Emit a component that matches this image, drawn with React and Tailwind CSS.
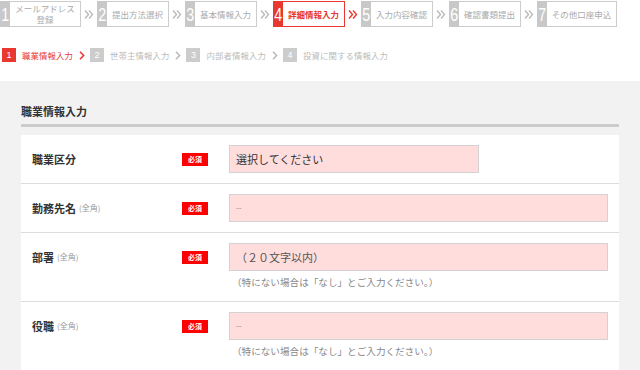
import React from "react";

const font = { fontFamily: '"Noto Sans CJK JP", "Noto Sans", sans-serif' };

const steps = [
  { n: 1, lines: ["メールアドレス", "登録"], w: "w-[71px]" },
  { n: 2, lines: ["提出方法選択"], w: "w-[62px]" },
  { n: 3, lines: ["基本情報入力"], w: "w-[62px]" },
  { n: 4, lines: ["詳細情報入力"], w: "w-[62px]", active: true },
  { n: 5, lines: ["入力内容確認"], w: "w-[62px]" },
  { n: 6, lines: ["確認書類提出"], w: "w-[62px]" },
  { n: 7, lines: ["その他口座申込"], w: "w-[70px]" },
];

const subs = [
  { n: 1, t: "職業情報入力", active: true },
  { n: 2, t: "世帯主情報入力" },
  { n: 3, t: "内部者情報入力" },
  { n: 4, t: "投資に関する情報入力" },
];

function DoubleChevron({ color }) {
  return (
    <svg width="10" height="9" viewBox="0 0 10 9" fill="none">
      <polyline points="1,0.5 4.5,4.5 1,8.5" stroke={color} strokeWidth="1.4" />
      <polyline points="5,0.5 8.5,4.5 5,8.5" stroke={color} strokeWidth="1.4" />
    </svg>
  );
}

function Chevron({ color }) {
  return (
    <svg width="6" height="9" viewBox="0 0 6 9" fill="none">
      <polyline points="1,0.8 4.6,4.5 1,8.2" stroke={color} strokeWidth="1.6" />
    </svg>
  );
}

function Badge() {
  return (
    <span className="inline-flex items-center justify-center w-[26px] h-[13px] bg-[#ff0000] text-white text-[7px] font-bold leading-none">
      必須
    </span>
  );
}

function Row({ label, sub, inputW, help, text, textColor, last }) {
  return (
    <div className={`flex pl-[11px] pr-[11px] pt-[10px] pb-[10px] ${last ? "" : "border-b border-[#dddddd]"}`}>
      <div className="w-[150px] h-[28px] flex items-center shrink-0">
        <span className="text-[11px] font-bold text-[#333] leading-none">{label}</span>
        {sub && <span className="ml-[3px] text-[8px] text-[#999] leading-none">{sub}</span>}
      </div>
      <div className="w-[47px] h-[28px] flex items-center shrink-0">
        <Badge />
      </div>
      <div className="flex-1 flex flex-col">
        <div className={`h-[28px] ${inputW} bg-[#ffdddd] border border-[#d3d3d3] flex items-center pl-[6px]`}>
          <span className={`leading-none ${text === "--" ? "text-[8px] text-[#888]" : "text-[11px]"} ${textColor}`}>{text}</span>
        </div>
        {help && (
          <div className="mt-[4px] h-[16px] flex items-center pl-[3px] text-[9.6px] text-[#888] leading-none">
            （特にない場合は「なし」とご入力ください。）
          </div>
        )}
      </div>
    </div>
  );
}

export default function App() {
  return (
    <div className="w-[640px] h-[370px] overflow-hidden bg-white flex flex-col" style={font}>
      {/* Top steps */}
      <div className="flex items-start pt-[1px] h-[27px]">
        {steps.map((s, i) => (
          <React.Fragment key={s.n}>
            <div className="flex h-[26px]">
              <div
                className={`w-[10px] h-full flex items-center justify-center overflow-visible ${s.active ? "bg-[#e8382f]" : "bg-[#c8c8c8]"}`}
              >
                <span
                  className="text-white text-[19px] leading-none scale-x-75"
                  style={{ fontFamily: '"Liberation Sans", Arial, sans-serif' }}
                >
                  {s.n}
                </span>
              </div>
              <div
                className={`${s.w} h-full border-y border-r flex flex-col items-center justify-center ${
                  s.active ? "border-[#e8382f] text-[#e8382f] font-bold" : "border-[#cccccc] text-[#aaaaaa]"
                }`}
              >
                {s.lines.map((l) => (
                  <span key={l} className="text-[8.5px] leading-[11px] whitespace-nowrap">
                    {l}
                  </span>
                ))}
              </div>
            </div>
            {i < steps.length - 1 && (
              <div className="w-[16px] h-[26px] flex items-center justify-center">
                <DoubleChevron color={steps[i].active ? "#e8382f" : "#bbbbbb"} />
              </div>
            )}
          </React.Fragment>
        ))}
      </div>

      {/* Sub steps */}
      <div className="flex items-center pl-[2px] mt-[21px] h-[14px]">
        {subs.map((s, i) => (
          <React.Fragment key={s.n}>
            <div
              className={`w-[14px] h-[14px] flex items-center justify-center text-white text-[9px] leading-none ${
                s.active ? "bg-[#e8382f]" : "bg-[#cccccc]"
              }`}
              style={{ fontFamily: '"Liberation Sans", Arial, sans-serif' }}
            >
              {s.n}
            </div>
            <span
              className={`ml-[6px] text-[8.4px] tracking-[0.12px] leading-none whitespace-nowrap ${s.active ? "text-[#e8382f]" : "text-[#bbbbbb]"}`}
            >
              {s.t}
            </span>
            {i < subs.length - 1 && (
              <div className="ml-[6px] mr-[5px] flex items-center">
                <Chevron color={s.active ? "#e8382f" : "#bbbbbb"} />
              </div>
            )}
          </React.Fragment>
        ))}
      </div>

      {/* Gray section */}
      <div className="mt-[19px] flex-1 bg-[#f2f2f2] px-[21px] pt-[22px]">
        <div className="h-[16px] flex items-center text-[11px] font-bold text-[#333] leading-none">職業情報入力</div>
        <div className="mt-[5px] h-[3px] bg-[#cccccc]" />
        <div className="mt-[8px] bg-white">
          <Row label="職業区分" inputW="w-[250px]" text="選択してください" textColor="text-[#333]" />
          <Row label="勤務先名" sub="(全角)" inputW="w-full" text="--" />
          <Row label="部署" sub="(全角)" inputW="w-full" text="（２０文字以内）" textColor="text-[#555] text-[10px]" help />
          <Row label="役職" sub="(全角)" inputW="w-full" text="--" help last />
        </div>
      </div>
    </div>
  );
}
